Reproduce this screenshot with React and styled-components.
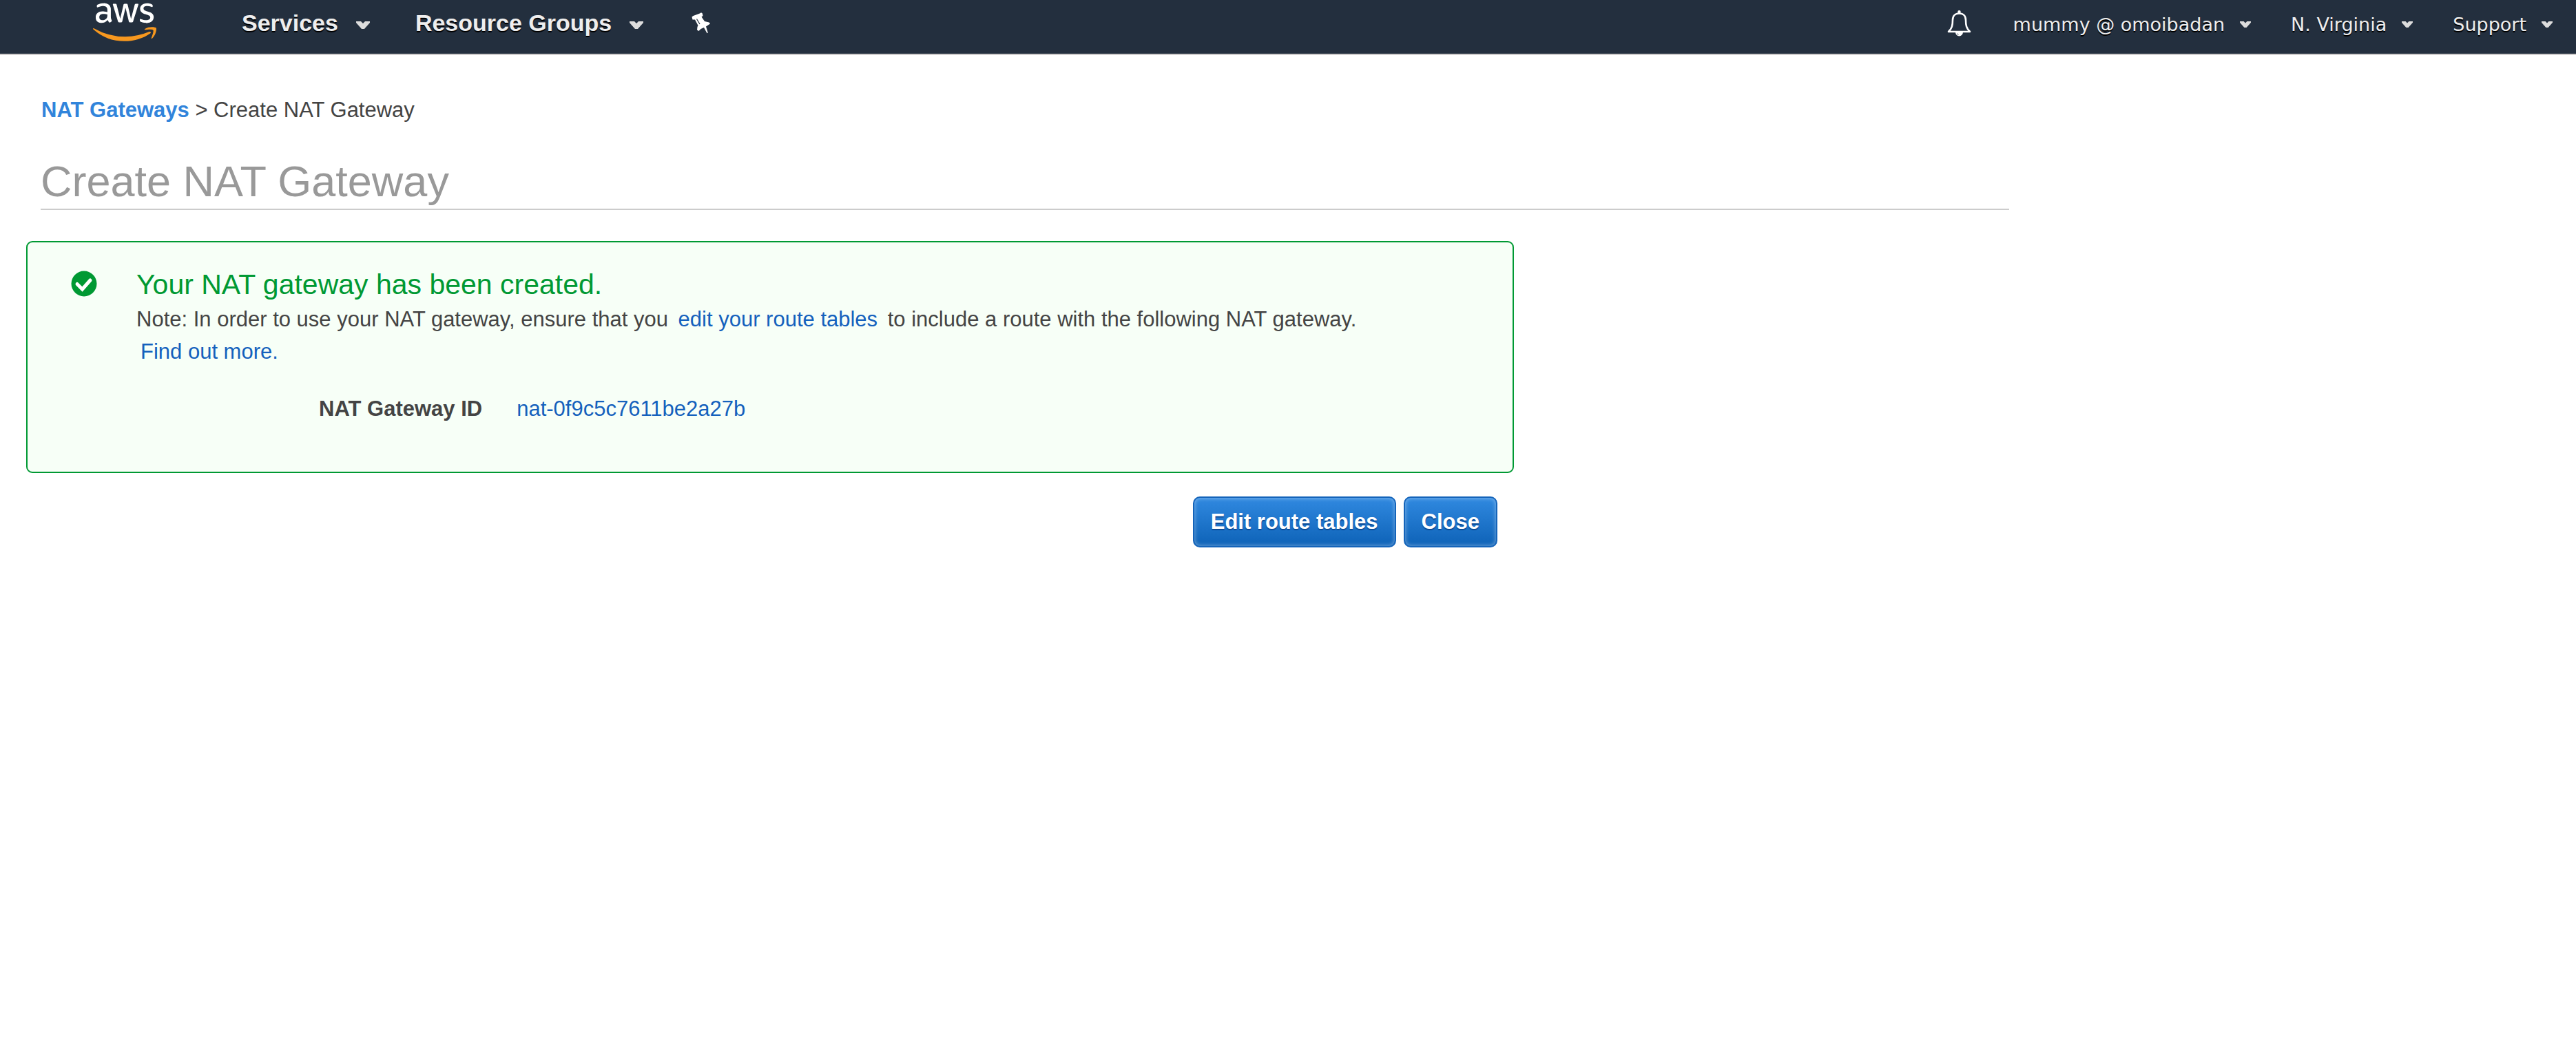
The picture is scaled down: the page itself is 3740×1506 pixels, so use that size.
import React from "react";
import styled, { createGlobalStyle } from "styled-components";

const GlobalStyle = createGlobalStyle`
  * { box-sizing: border-box; }
  body { margin: 0; background: #fff; color: #444; font-family: "Liberation Sans", Arial, sans-serif; font-size: 31px; line-height: 47px; }
  a { text-decoration: none; }
`;

const Header = styled.header`
  display: flex;
  justify-content: space-between;
  height: 80px;
  padding: 0 34px 0 135px;
  background: #232f3e;
  border-bottom: 2px solid #d0cdcd;
`;

const NavGroup = styled.nav`
  display: flex;
  align-items: flex-start;
`;

const LogoLink = styled.a`
  display: block;
  margin-right: 124px;
  svg { display: block; }
`;

const MenuButton = styled.button`
  display: flex;
  align-items: center;
  gap: ${(p) => (p.$main ? 26 : 22)}px;
  height: ${(p) => (p.$main ? 66 : 70)}px;
  margin: 0 ${(p) => (p.$main ? 66 : 58)}px 0 0;
  padding: 0;
  border: 0;
  background: none;
  color: #eee;
  font: ${(p) => (p.$main ? 'bold 34px "Liberation Sans", Arial, sans-serif' : '27px "DejaVu Sans", Verdana, sans-serif')};
  text-shadow: 0 2px 0 #000;
  white-space: nowrap;
  &:last-child { margin-right: 0; }
  svg { margin-top: ${(p) => (p.$main ? 6 : 0)}px; }
`;

const IconButton = styled.button`
  display: flex;
  align-items: center;
  height: 68px;
  margin: 0;
  padding: ${(p) => (p.$wide ? "0 60px 0 0" : "0 4px")};
  border: 0;
  background: none;
`;

const Main = styled.main`
  padding: 56px 38px;
`;

const Breadcrumb = styled.nav`
  padding: 0 22px;
  a { color: #3184db; font-weight: bold; }
`;

const Title = styled.h1`
  width: 78%;
  margin: 44px 0 45px 21px;
  padding-bottom: 4px;
  border-bottom: 2px solid #ccc;
  color: #999;
  font-size: 63px;
  font-weight: normal;
  line-height: 72px;
`;

const Content = styled.div`
  max-width: 2160px;
`;

const Notice = styled.section`
  display: flex;
  gap: 57px;
  padding: 36px 63px 68px;
  border: 2px solid #093;
  border-radius: 9px;
  background: #f7fff7;
  > svg { flex: none; margin-top: 5px; }
`;

const NoticeTitle = styled.h2`
  margin: 0 0 2px;
  color: #093;
  font-size: 41px;
  font-weight: normal;
  line-height: 50px;
`;

const NoticeText = styled.p`
  margin: 0;
`;

const TextLink = styled.a`
  padding: 0 6px;
  color: #1461bd;
`;

const Details = styled.dl`
  display: flex;
  gap: 44px;
  margin: 36px 0 0 265px;
  dt { font-weight: bold; }
  dd { margin: 0; }
`;

const Actions = styled.div`
  display: flex;
  justify-content: flex-end;
  gap: 11px;
  padding: 34px 24px;
`;

const Button = styled.button`
  height: 74px;
  padding: 0 24px;
  border: 2px solid #1464ba;
  border-radius: 10px;
  background: linear-gradient(#3089e0, #1166bb 90%);
  box-shadow: inset 0 0 6px rgba(255, 255, 255, 0.45);
  color: #fff;
  font: bold 31px "Liberation Sans", Arial, sans-serif;
  text-shadow: 0 2px 1px #0c4a94;
`;

const Caret = ({ size }) => (
  <svg width={size} height={size === 20 ? 11 : 9} viewBox="0 0 20 11" aria-hidden="true">
    <path d="M0 0h7l3 3 3-3h7v2l-8 9H8L0 2z" fill="#ddd" />
  </svg>
);

const AwsLogo = () => (
  <svg width="92" height="60" viewBox="0 32 640 417" aria-hidden="true">
    <path
      fill="#fff"
      d="M180.41 203.01c-.72 22.65 10.6 32.68 10.88 39.05a8.164 8.164 0 0 1-4.1 6.27l-12.8 8.96a10.66 10.66 0 0 1-5.63 1.92c-.43-.02-8.19 1.83-20.48-25.61a78.608 78.608 0 0 1-62.61 29.45c-16.28.89-60.4-9.24-58.13-56.21-1.59-38.28 34.06-62.06 70.93-60.05 7.1.02 21.6.37 46.99 6.27v-15.62c2.69-26.46-14.7-46.99-44.81-43.91-2.4.01-19.4-.5-45.84 10.11-7.36 3.38-8.3 2.82-10.75 2.82-7.41 0-4.36-21.48-2.94-24.2 5.21-6.4 35.86-18.35 65.94-18.18a76.857 76.857 0 0 1 55.69 17.28 70.285 70.285 0 0 1 17.67 52.36l-.01 69.29zM93.99 235.4c32.43-.47 46.16-19.97 49.29-30.47 2.46-10.05 2.05-16.41 2.05-27.4-9.67-2.32-23.59-4.85-39.56-4.87-15.15-1.14-42.82 5.63-41.74 32.26-1.24 16.79 11.12 31.4 29.96 30.48zm170.92 23.05c-7.86.72-11.52-4.86-12.68-10.37l-49.8-164.65c-.97-2.78-1.61-5.65-1.92-8.58a4.61 4.61 0 0 1 3.86-5.25c.24-.04-2.13 0 22.25 0 8.78-.88 11.64 6.03 12.55 10.37l35.72 140.83 33.16-140.83c.53-3.22 2.94-11.07 12.8-10.24h17.16c2.17-.18 11.11-.5 12.68 10.37l33.42 142.63L420.98 80.1c.48-2.18 2.72-11.37 12.68-10.37h19.72c.85-.13 6.15-.81 5.25 8.58-.43 1.85 3.41-10.66-52.75 169.9-1.15 5.51-4.82 11.09-12.68 10.37h-18.69c-10.94 1.15-12.51-9.66-12.68-10.75L328.67 110.7l-32.78 136.99c-.16 1.09-1.73 11.9-12.68 10.75h-18.3zm273.48 5.63c-5.88.01-33.92-.3-57.36-12.29a12.802 12.802 0 0 1-7.81-11.91v-10.75c0-8.45 6.2-6.9 8.83-5.89 10.04 4.06 16.48 7.14 28.81 9.6 36.65 7.53 52.77-2.3 56.72-4.48 13.15-7.81 14.19-25.68 5.25-34.95-10.48-8.79-15.48-9.12-53.13-21-4.64-1.29-43.7-13.61-43.79-52.36-.61-28.24 25.05-56.18 69.52-55.95 12.67-.01 46.43 4.13 55.57 15.62 1.35 2.09 2.02 4.55 1.92 7.04v10.11c0 4.44-1.62 6.66-4.87 6.66-7.71-.86-21.39-11.17-49.16-10.75-6.89-.36-39.89.91-38.41 24.97-.43 18.96 26.61 26.07 29.7 26.89 36.46 10.97 48.65 12.79 63.12 29.58 17.14 22.25 7.9 48.3 4.35 55.44-19.08 37.49-68.42 34.44-69.26 34.42z"
    />
    <path
      fill="#f7981f"
      d="M578.59 368.94c-70.03 51.72-171.69 79.25-258.49 79.25A469.127 469.127 0 0 1 2.83 327.46c-6.53-5.89-.77-13.96 7.17-9.47a637.37 637.37 0 0 0 316.88 84.12 630.22 630.22 0 0 0 241.59-49.55c11.78-5 21.77 7.8 10.12 16.38zM607.78 335.65c-8.96-11.52-59.28-5.38-81.81-2.69-6.79.77-7.94-5.12-1.79-9.47 40.07-28.17 105.88-20.1 113.44-10.63 7.55 9.47-2.05 75.41-39.56 106.91-5.76 4.87-11.27 2.3-8.71-4.1 8.44-21.25 27.39-68.49 18.43-80.02z"
    />
  </svg>
);

const PinIcon = () => (
  <svg width="28" height="32" viewBox="0 0 28 32" aria-hidden="true">
    <path d="M.5 6.5 2.5 5 12 1.5l2-1.2 1.8 1.2.7 3.5-2 1.5L19 13l6.5 1.5L27 16.5l-6 4 2.8 9-1.3.8L18 22l-4.5 2-3 3L8 25.5 8.5 21l1-2L5 10.5H1.5z" fill="#fff" />
    <path d="m7.5 9.5 4.5 7.5" stroke="#232f3e" strokeWidth="1.2" />
  </svg>
);

const BellIcon = () => (
  <svg width="36" height="38" viewBox="0 0 36 38" aria-hidden="true">
    <circle cx="17.5" cy="2.2" r="2.2" fill="#fff" />
    <path d="M17.5 4.5C11.5 4.5 8 8.5 8 14c0 8-1 12-6 17h31c-5-5-6-9-6-17 0-5.5-3.5-9.5-9.5-9.5z" fill="none" stroke="#fff" strokeWidth="2.6" strokeLinejoin="round" />
    <path d="M12 31.5a5.5 6 0 0 0 11 0z" fill="#fff" />
    <path d="M14.5 33.5q.5 1.8 2 2" fill="none" stroke="#232f3e" strokeWidth="0.8" />
  </svg>
);

const CheckIcon = () => (
  <svg width="38" height="38" viewBox="0 0 38 38" aria-hidden="true">
    <circle cx="19" cy="19" r="18.5" fill="#093" />
    <path d="M9 19.5l7.5 7.5L28 14" fill="none" stroke="#fff" strokeWidth="5" strokeLinecap="round" />
  </svg>
);

export default function App() {
  return (
    <>
      <GlobalStyle />
      <Header>
        <NavGroup aria-label="Services">
          <LogoLink href="#" aria-label="AWS"><AwsLogo /></LogoLink>
          <MenuButton $main>Services<Caret size={20} /></MenuButton>
          <MenuButton $main>Resource Groups<Caret size={20} /></MenuButton>
          <IconButton aria-label="Pin shortcuts"><PinIcon /></IconButton>
        </NavGroup>
        <NavGroup aria-label="Account">
          <IconButton aria-label="Notifications" $wide><BellIcon /></IconButton>
          <MenuButton>mummy @ omoibadan<Caret size={16} /></MenuButton>
          <MenuButton>N. Virginia<Caret size={16} /></MenuButton>
          <MenuButton>Support<Caret size={16} /></MenuButton>
        </NavGroup>
      </Header>
      <Main>
        <Breadcrumb aria-label="Breadcrumb"><a href="#">NAT Gateways</a> &gt; Create NAT Gateway</Breadcrumb>
        <Title>Create NAT Gateway</Title>
        <Content>
          <Notice>
            <CheckIcon />
            <div>
              <NoticeTitle>Your NAT gateway has been created.</NoticeTitle>
              <NoticeText>
                Note: In order to use your NAT gateway, ensure that you <TextLink href="#">edit your route tables</TextLink> to include a route with the following NAT gateway.
              </NoticeText>
              <NoticeText><TextLink href="#">Find out more.</TextLink></NoticeText>
              <Details>
                <dt>NAT Gateway ID</dt>
                <dd><TextLink href="#">nat-0f9c5c7611be2a27b</TextLink></dd>
              </Details>
            </div>
          </Notice>
          <Actions>
            <Button>Edit route tables</Button>
            <Button>Close</Button>
          </Actions>
        </Content>
      </Main>
    </>
  );
}
